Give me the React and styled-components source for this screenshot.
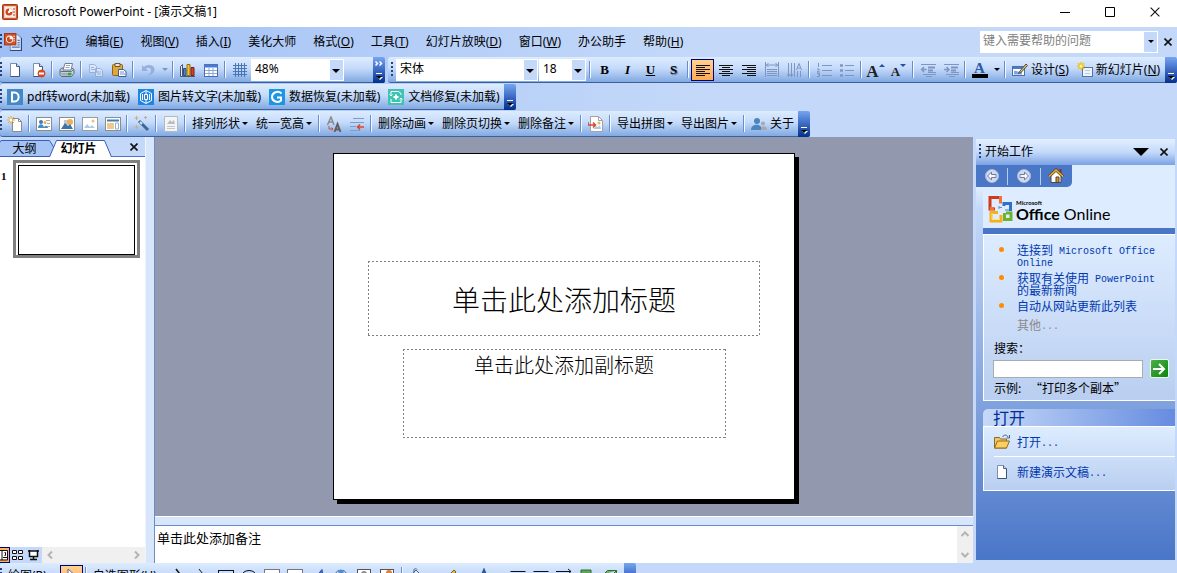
import React from 'react';
import styled, { createGlobalStyle, css } from 'styled-components';

const UI_FONT = '"Noto Sans", "Noto Sans CJK SC", sans-serif';
const SONG_FONT = '"Liberation Mono", "Noto Sans CJK SC", monospace';

const NAVY = '#000080';
const LINE = '#3b619c';
const PANEL = '#c4d9f9';
const LINK = '#0038b0';

const GlobalStyle = createGlobalStyle`
  * {
    box-sizing: border-box;
  }
  body {
    margin: 0;
    overflow: hidden;
    background: ${PANEL};
    font: 12px/16px ${UI_FONT};
    color: #000;
  }
  button,
  input,
  select {
    margin: 0;
    padding: 0;
    border: 0;
    border-radius: 0;
    background: none;
    font: inherit;
    color: inherit;
    appearance: none;
    outline: none;
  }
  svg {
    display: block;
    flex: none;
  }
`;

const Window = styled.div`
  display: flex;
  flex-direction: column;
  height: 100vh;
  overflow: hidden;
`;

/* ---------- title and menu ---------- */

const TitleBar = styled.header`
  display: flex;
  align-items: center;
  height: 27px;
  padding: 0 0 3px 2px;
  background: #fff;
`;

const Title = styled.h1`
  flex: 1;
  margin: 0 0 0 5px;
  font-size: 12px;
  line-height: 20px;
  font-weight: 400;
`;

const WindowButton = styled.button`
  display: grid;
  place-items: center;
  width: 45px;
  height: 24px;
`;

const Docks = styled.div`
  display: flex;
  flex-direction: column;
  gap: 1px;
  background: linear-gradient(90deg, #9ebef5, ${PANEL} 60%);
`;

const MenuBar = styled.nav`
  display: flex;
  align-items: center;
  gap: 1px;
  height: 29px;
`;

const Menu = styled.button`
  padding: 0 8px;
  white-space: nowrap;
`;

const Key = styled.span`
  text-decoration: underline;
  text-underline-offset: 1px;
`;

const HelpBox = styled.div`
  display: flex;
  flex: none;
  width: 178px;
  height: 22px;
  margin-left: auto;
  border: 1px solid #fff;
  background: #fff;
`;

const HelpInput = styled.input`
  flex: 1;
  min-width: 0;
  padding: 0 2px 2px;
  &::placeholder {
    color: #808080;
    opacity: 1;
  }
`;

const HelpDrop = styled.button`
  display: grid;
  place-items: center;
  width: 13px;
  background: ${PANEL};
`;

const CloseButton = styled.button`
  display: grid;
  place-items: center;
  width: 18px;
  height: 16px;
`;

/* ---------- toolbars ---------- */

const DockRow = styled.div`
  display: flex;
  gap: 3px;
`;

const ToolbarBox = styled.div`
  display: flex;
  align-items: center;
  flex: ${p => (p.$grow ? '1 1 auto' : 'none')};
  height: 26px;
  padding-left: ${p => (p.$inset ? '3px' : '0')};
  border-bottom: 1px solid ${LINE};
  border-radius: 3px;
  background: linear-gradient(#ddecfe, #c5dbfb 45%, #81a9e2);
  white-space: nowrap;
`;

const Grip = styled.span`
  flex: none;
  width: ${p => p.$width || 3}px;
  height: 16px;
  background: linear-gradient(#27417c 50%, transparent 50%) 0 0 / 2px 4px repeat-y;
`;

const Spacer = styled.span`
  width: 28px;
`;

const Cap = styled.button`
  display: flex;
  flex-direction: column;
  align-items: center;
  justify-content: space-between;
  flex: none;
  width: 12px;
  height: 26px;
  margin: 0 0 -1px auto;
  padding: 4px 0 3px;
  border-radius: 0 2px 2px 0;
  background: linear-gradient(#75a6f1, #3562bd 55%, #00318b);
`;

const Tool = styled.button`
  display: flex;
  align-items: center;
  justify-content: center;
  flex: none;
  min-width: 23px;
  height: 22px;
  opacity: ${p => (p.$off ? 0.75 : 1)};
  ${p =>
    p.$active &&
    css`
      border: 1px solid ${NAVY};
      background: linear-gradient(#ffd091, #ffab52);
    `};
`;

const LabelTool = styled.button`
  display: flex;
  align-items: center;
  flex: none;
  gap: ${p => p.$gap || 3}px;
  height: 22px;
  padding: 0 ${p => p.$pad || 4}px;
`;

const Separator = styled.span`
  flex: none;
  width: 2px;
  height: 17px;
  margin: 0 2px;
  border-left: 1px solid #6a8ccb;
  border-right: 1px solid #f1f9ff;
`;

const DropMark = styled.span`
  flex: none;
  border: 3px solid transparent;
  border-top-color: ${p => p.$color || '#000'};
  border-bottom: 0;
`;

const SmallDrop = styled.button`
  display: grid;
  place-items: center;
  flex: none;
  width: 11px;
  height: 22px;
`;

const ComboBox = styled.span`
  position: relative;
  flex: none;
  width: ${p => p.$width}px;
  height: 22px;
  margin-right: 1px;
  border: 1px solid #fff;
  background: linear-gradient(270deg, ${PANEL} 13px, #fff 13px);
  select {
    width: 100%;
    height: 20px;
    padding: 0 3px 2px;
  }
`;

const ComboMark = styled(DropMark)`
  position: absolute;
  right: 3px;
  top: 9px;
  border-width: 4px 4px 0;
  pointer-events: none;
`;

const Glyph = styled.span`
  font: ${p => (p.$italic ? 'italic ' : '')}bold 13px/16px 'Liberation Serif', serif;
  text-decoration: ${p => (p.$underline ? 'underline' : 'none')};
  text-shadow: ${p => (p.$shadow ? '1px 1px 1px #5b6c8c' : 'none')};
`;

const FontSizeGlyph = styled.span`
  align-self: flex-end;
  font: bold ${p => p.$size}px/18px 'Liberation Serif', serif;
  color: #222;
`;

const ColorGlyph = styled.span`
  width: 16px;
  height: 16px;
  border-bottom: 4px solid #000;
  font: bold 15px/12px 'Liberation Serif', serif;
  text-align: center;
  color: #2f5aa8;
`;

const Badge = styled.span`
  display: grid;
  place-items: center;
  width: 16px;
  height: 16px;
  background: ${p => p.$color};
`;

/* ---------- workspace ---------- */

const Workspace = styled.main`
  display: flex;
  flex: 1;
  min-height: 0;
`;

const Outline = styled.aside`
  display: flex;
  flex-direction: column;
  flex: none;
  width: 145px;
  background: #fff;
`;

const TabStrip = styled.div`
  display: flex;
  align-items: flex-end;
  height: 20px;
  padding-right: 5px;
  border-bottom: 1px solid #4a76c8;
  background: ${PANEL};
`;

const Tab = styled.button`
  position: relative;
  z-index: 0;
  width: ${p => (p.$active ? 63 : 55)}px;
  height: 17px;
  margin: 0 0 -1px ${p => (p.$active ? '-6px' : '0')};
  padding: 0 ${p => (p.$active ? 4 : 6)}px 1px 0;
  font-weight: ${p => (p.$active ? 700 : 400)};
  line-height: 15px;
  svg {
    position: absolute;
    z-index: -1;
    inset: 0;
  }
`;

const TabClose = styled(CloseButton)`
  margin: 0 -3px 1px auto;
`;

const Thumbs = styled.ol`
  display: flex;
  flex: 1;
  margin: 0;
  padding: 3px 5px 0 1px;
  list-style: none;
  li {
    display: flex;
    flex: 1;
    align-items: flex-start;
    justify-content: space-between;
  }
`;

const ThumbNumber = styled.span`
  padding-top: 8px;
  font: bold 11px/16px 'Liberation Serif', serif;
`;

const Thumb = styled.button`
  width: 127px;
  height: 98px;
  padding: 2px;
  border: 3px solid #808080;
  background: #fff;
  &::before {
    content: '';
    display: block;
    height: 100%;
    border: 1px solid #000;
  }
`;

const ViewRow = styled.div`
  display: flex;
  height: 16px;
  background: #f0f0f0;
`;

const ViewButton = styled.button`
  display: flex;
  align-items: center;
  justify-content: ${p => (p.$active ? 'flex-start' : 'center')};
  flex: none;
  width: ${p => (p.$active ? 10 : 16)}px;
  height: 16px;
  background: ${PANEL};
  ${p =>
    p.$active &&
    css`
      border: 1px solid ${NAVY};
      border-left: 0;
      background: #ffb25c;
    `};
`;

const ScrollTrack = styled.div`
  display: flex;
  flex: ${p => (p.$vertical ? 'none' : 1)};
  flex-direction: ${p => (p.$vertical ? 'column' : 'row')};
  align-items: center;
  justify-content: space-between;
  padding: 4px;
  background: #f0f0f0;
`;

const Splitter = styled.div`
  flex: none;
  width: 10px;
  border-left: 1px solid #eef4fe;
  border-right: 1px solid #6a8ccb;
  background: #d8e6fb;
`;

const Editor = styled.section`
  display: flex;
  flex: 1;
  flex-direction: column;
  min-width: 0;
`;

const Canvas = styled.div`
  display: flex;
  flex: 1;
  align-items: center;
  justify-content: center;
  min-height: 0;
  background: #9298ad;
`;

const Slide = styled.article`
  display: flex;
  flex-direction: column;
  align-items: center;
  flex: none;
  gap: 13px;
  width: 462px;
  height: 347px;
  padding-top: 107px;
  border: 1px solid #000;
  background: #fff;
  box-shadow: 4px 4px 0 #000;
`;

const dash = (dir, place, size) =>
  `repeating-linear-gradient(${dir}, #808080 0 2px, transparent 2px 4px) ${place} / ${size} no-repeat`;

const Placeholder = styled.div`
  width: ${p => (p.$sub ? 323 : 392)}px;
  height: ${p => (p.$sub ? 89 : 75)}px;
  padding-top: ${p => (p.$sub ? 2 : 20)}px;
  background: ${dash('90deg', 'top', '100% 1px')}, ${dash('90deg', 'bottom', '100% 1px')},
    ${dash('180deg', 'left', '1px 100%')}, ${dash('180deg', 'right', '1px 100%')};
  font-family: 'Noto Sans CJK SC', sans-serif;
  font-weight: 300;
  font-size: ${p => (p.$sub ? 20 : 28)}px;
  line-height: ${p => (p.$sub ? 28 : 36)}px;
  text-align: center;
`;

const NotesSplit = styled.div`
  flex: none;
  height: 10px;
  border-top: 1px solid #fff;
  border-bottom: 1px solid #6a8ccb;
  background: #d8e6fb;
`;

const Notes = styled.div`
  display: flex;
  flex: none;
  justify-content: space-between;
  height: 37px;
  background: #fff;
`;

const NotesText = styled.p`
  margin: 0;
  padding: 4px 2px;
  font-size: 13px;
`;

/* ---------- task pane ---------- */

const TaskPane = styled.aside`
  display: flex;
  flex: none;
  flex-direction: column;
  width: 204px;
  padding: 2px 2px 3px 3px;
  background: ${PANEL};
`;

const PaneHeader = styled.div`
  display: flex;
  align-items: center;
  height: 26px;
  padding: 0 2px 0 3px;
  background: linear-gradient(#e3efff, #c4dafa 50%, #7ba2e4);
`;

const PaneTitle = styled.h2`
  flex: 1;
  margin: 0 0 0 3px;
  font-size: 12px;
  font-weight: 400;
`;

const NavDrop = styled(CloseButton)`
  width: 28px;
`;

const PaneNav = styled.div`
  display: flex;
  align-items: center;
  height: 22px;
  background: #ddecff;
`;

const NavGroup = styled.div`
  display: flex;
  align-items: center;
  width: 96px;
  height: 22px;
  border-radius: 0 0 5px 0;
  background: #4a76c8;
`;

const NavButton = styled.button`
  display: grid;
  place-items: center;
  flex: 1;
`;

const NavLine = styled.span`
  width: 1px;
  height: 17px;
  background: #b9cdf0;
`;

const PaneBody = styled.div`
  flex: 1;
  padding-left: 7px;
  background: linear-gradient(#ddecff, #c4d9f9 6%, #4a76c8);
`;

const Brand = styled.div`
  display: flex;
  align-items: center;
  height: 47px;
  padding: 2px 0 0 4px;
  border-bottom: 6px solid #4a76c8;
  background: #ddecff;
`;

const BrandName = styled.div`
  display: flex;
  flex-direction: column;
  margin: 5px 0 0 1px;
  font-family: Lato, 'Liberation Sans', sans-serif;
  font-size: 16px;
  line-height: 16px;
  small {
    font-size: 6px;
    line-height: 6px;
    font-weight: 700;
  }
`;

const OnlineBox = styled.section`
  display: flex;
  flex-direction: column;
  padding: 9px 6px 4px 10px;
  border: 1px solid #fff;
  border-right: 0;
  background: linear-gradient(#ddecff, #b9cef0);
  font-family: 'Noto Sans CJK SC', sans-serif;
`;

const Links = styled.ul`
  display: flex;
  flex-direction: column;
  gap: 4px;
  margin: 0 0 0 23px;
  padding: 0;
  list-style: none;
  line-height: 12px;
  li {
    position: relative;
  }
  li::before {
    content: '';
    position: absolute;
    left: -18px;
    top: 3px;
    width: 5px;
    height: 5px;
    border-radius: 50%;
    background: #ff8c00;
  }
`;

const PaneLink = styled.a`
  color: ${LINK};
  text-decoration: none;
`;

const MoreLink = styled(PaneLink)`
  margin: 6px 0 0 23px;
  line-height: 14px;
  color: #8a8a8a;
`;

const Latin = styled.span`
  font-family: ${SONG_FONT};
  font-size: 10px;
  line-height: 0;
  vertical-align: 1px;
`;

const SearchLabel = styled.label`
  margin-top: 8px;
  line-height: 16px;
`;

const SearchRow = styled.div`
  display: flex;
  align-items: center;
  justify-content: space-between;
  margin: 3px 0 2px;
`;

const SearchInput = styled.input`
  flex: 1;
  min-width: 0;
  height: 18px;
  margin: 0 7px 0 -1px;
  padding: 0 3px;
  border: 1px solid #a5acb2;
  background: #fff;
`;

const GoButton = styled.button`
  display: grid;
  place-items: center;
  width: 19px;
  height: 19px;
  border: 1px solid #e8f6e8;
  border-radius: 2px;
  background: linear-gradient(135deg, #4db04d, #0a860a);
`;

const Example = styled.span`
  line-height: 16px;
`;

const OpenTitle = styled.h3`
  height: 17px;
  margin: 8px 0 0;
  padding-left: 10px;
  border-radius: 5px 0 0 0;
  background: linear-gradient(90deg, #c6d9f8, #668ce0);
  font: 16px/16px 'Noto Sans CJK SC', sans-serif;
  color: #002d96;
`;

const OpenBox = styled.section`
  padding: 0 0 3px 10px;
  border: 1px solid #fff;
  border-right: 0;
  background: linear-gradient(#ddecff, #b9cef0);
  font-family: 'Noto Sans CJK SC', sans-serif;
`;

const OpenItem = styled(PaneLink)`
  display: flex;
  align-items: center;
  gap: 7px;
  height: 30px;
  border-bottom: ${p => (p.$first ? '1px solid #fff' : '0')};
`;

const BottomDock = styled.footer`
  flex: none;
  height: 10px;
  overflow: hidden;
  background: ${PANEL};
`;

const DrawBar = styled(ToolbarBox)`
  width: 636px;
`;

/* ---------- icons ---------- */

const Icon = ({ size = 16, children, ...rest }) => (
  <svg width={size} height={size} viewBox="0 0 16 16" fill="none" aria-hidden="true" {...rest}>
    {children}
  </svg>
);

const page = (
  <>
    <path d="M3.5 1.5h6l3 3v10h-9z" fill="#fff" stroke="#7d8fae" />
    <path d="M12.5 4.5v10h-9" stroke="#3d5680" />
    <path d="M9.5 1.5v3h3" fill="#c7d6ee" stroke="#4b628c" />
  </>
);

const icons = {
  ppt: (
    <>
      <rect x="0.5" y="0.5" width="15" height="15" rx="1" fill="#d0542b" stroke="#a63a18" />
      <rect x="2.5" y="2.5" width="11" height="11" fill="#fbeee8" stroke="#f6c9b4" />
      <circle cx="7" cy="8" r="3.5" fill="#cf4520" />
      <path d="M7 8V4.5A3.5 3.5 0 0 1 10.5 8z" fill="#fff" />
      <circle cx="7" cy="8" r="1.2" fill="#fff" />
      <path d="M11 5h2M11 8h2M11 11h2" stroke="#b5401b" />
    </>
  ),
  pptDoc: (
    <>
      <path d="M5.5 1.5h7l3 3v11h-10z" fill="#dce8fb" stroke="#7f96c2" />
      <path d="M15.5 4.5v11h-10" stroke="#2c4878" />
      <path d="M7 12.5h7M12 6.5h2M12 8.5h2M12 10.5h2" stroke="#4f77b8" />
      <rect x="0.5" y="0.5" width="10" height="10" fill="#d0542b" stroke="#a63a18" />
      <circle cx="5" cy="5.5" r="3.2" fill="#fff" />
      <path d="M5 5.5V3A2.5 2.5 0 1 0 7.5 5.5z" fill="#cf4520" />
      <path d="M9 2.5v6" stroke="#fff" strokeDasharray="1 1" />
    </>
  ),
  page,
  deny: (
    <>
      {page}
      <circle cx="11.5" cy="11.5" r="3.5" fill="#dd4a24" stroke="#c64a28" />
      <path d="M9 11.5h5" stroke="#fff" strokeWidth="2" />
    </>
  ),
  printer: (
    <>
      <path d="M1 7.5l2-1.5h10l2 1.5v4l-2.5 3H2.5L1 12.5z" fill="#c9ced6" stroke="#5c6a80" />
      <path d="M6 1.5h7.5L12 8H4z" fill="#fff" stroke="#6e7f99" />
      <path d="M7 3.5h4M6.5 5.5h4" stroke="#9aa9c0" />
      <path d="M1.5 9.5h11l2-2" stroke="#5f6e84" />
      <path d="M2 11h10v2.5H3z" fill="#a2acba" />
      <path d="M9 12h3.5" stroke="#22b32c" strokeWidth="2.5" />
    </>
  ),
  copy: (
    <>
      <path d="M1.5 2.5h5l2 2v6h-7zM7.5 6.5h5l2 2v6h-7z" fill="#dfe9fa" stroke="#8ea6cf" />
      <path d="M3 5.5h3M3 7.5h4M9 10h4M9 12h4" stroke="#8ea6cf" />
    </>
  ),
  paste: (
    <>
      <rect x="1.5" y="2.5" width="10" height="11" rx="1" fill="#e0a73d" stroke="#8f641a" />
      <path d="M4 1.5h5v3H4z" fill="#ece5cc" stroke="#6c5a32" />
      <path d="M7.5 7.5h5l2.5 2v5H7.5z" fill="#fff" stroke="#3d5b94" />
      <path d="M9 10h4M9 12h5" stroke="#6c8cc6" />
    </>
  ),
  undo: (
    <path
      d="M2 3v6h6L5.8 6.5C8 5 11 5.5 11 8.5c0 2-1.2 3.5-3 5 3.5-.8 6.5-3 6.5-6 0-4.5-6.5-6-10.5-2.5z"
      fill="#8aa3d0"
    />
  ),
  chart: (
    <>
      <path d="M0.5 4.5l2-2v12h-2z" fill="#dfe7f2" stroke="#4b5770" />
      <path d="M2.5 14.5H15" stroke="#4b5770" />
      <path d="M3.5 6.5h2.5v7H3.5z" fill="#4d81d0" stroke="#28508f" />
      <path d="M7 2.5h3v11H7z" fill="#f1c331" stroke="#977010" />
      <path d="M11 5.5h3v8h-3z" fill="#cf4232" stroke="#7d1c12" />
    </>
  ),
  table: (
    <>
      <rect x="1.5" y="2.5" width="13" height="12" fill="#fff" stroke="#4a6db0" />
      <path d="M1 4h14" stroke="#4a7ad0" strokeWidth="3" />
      <path d="M2 8.5h12M2 11.5h12M6 6v8M10 6v8" stroke="#8ba8d6" />
    </>
  ),
  grid: (
    <path
      d="M3.5 1v14M6.5 1v14M9.5 1v14M12.5 1v14M1 3.5h14M1 6.5h14M1 9.5h14M1 12.5h14"
      stroke="#4a74b8"
    />
  ),
  left: <path d="M1 3.5h14M1 5.5h9M1 7.5h14M1 9.5h9M1 11.5h14M1 13.5h9" stroke="#111" />,
  center: <path d="M1 3.5h14M4 5.5h8M1 7.5h14M4 9.5h8M1 11.5h14M4 13.5h8" stroke="#111" />,
  right: <path d="M1 3.5h14M6 5.5h9M1 7.5h14M6 9.5h9M1 11.5h14M6 13.5h9" stroke="#111" />,
  spread: (
    <path
      d="M1.5 0v15M14.5 0v15M2 3h12M4.5 1L2.5 3l2 2M11.5 1l2 2-2 2M3 7.5h10M3 9.5h10M3 11.5h10M3 13.5h10"
      stroke="#7f96c2"
    />
  ),
  vertical: (
    <>
      <path d="M1.5 1v14M4.5 1v14M7.5 1v14M10.5 9v6M13.5 9v6" stroke="#7f96c2" />
      <path d="M9.5 8L12 1.5 14.5 8M10.5 6h3" stroke="#7f96c2" />
      <path d="M0 12l1.5 2.5L3 12M3 12l1.5 2.5L6 12" stroke="#7f96c2" />
    </>
  ),
  numbers: (
    <>
      <path d="M6 3.5h10M6 8.5h10M6 13.5h10" stroke="#7f96c2" />
      <path d="M2.5 1v4M1 7h2v1.5L1 10h3M1 11.5h2.5v3H1M2 13h1" stroke="#7f96c2" />
    </>
  ),
  bullets: (
    <>
      <path d="M6 3.5h9M6 8.5h9M6 13.5h9" stroke="#7f96c2" />
      <path d="M1 3.5h3M1 8.5h3M1 13.5h3" stroke="#7f96c2" strokeWidth="2.5" />
    </>
  ),
  outdent: (
    <>
      <path d="M1 2.5h15M8 10.5h8M3 12.5h13M6 14.5h6" stroke="#7f96c2" />
      <path d="M6.5 7.5h-5M4 5L1.5 7.5 4 10" stroke="#7f96c2" strokeWidth="1.5" />
      <path d="M8 5.5h7M8 8.5h5" stroke="#7f96c2" strokeWidth="2" />
    </>
  ),
  indent: (
    <>
      <path d="M1 2.5h15M8 10.5h8M3 12.5h13M6 14.5h6" stroke="#7f96c2" />
      <path d="M1 7.5h5M3.5 5L6 7.5 3.5 10" stroke="#7f96c2" strokeWidth="1.5" />
      <path d="M8 5.5h7M8 8.5h5" stroke="#7f96c2" strokeWidth="2" />
    </>
  ),
  design: (
    <>
      <rect x="0.5" y="4.5" width="12" height="9" fill="#fff" stroke="#4b6fae" />
      <path d="M1 6h11" stroke="#4a7ad0" strokeWidth="2" />
      <path d="M2 9c2-1 4 2 8 0v3.5H2z" fill="#7ea6e0" />
      <path d="M14 2l1.5 1.5L9 10.5l-2.5 1L8 9z" fill="#f0c24a" stroke="#4c4a56" />
    </>
  ),
  newSlide: (
    <>
      <rect x="5.5" y="5.5" width="10" height="9" fill="#eef4fd" stroke="#5874a4" />
      <path d="M8 8.5h5M8 11.5h5" stroke="#b7c8e4" />
      <path d="M4 0v8M0 4h8M1 1l6 6M7 1L1 7" stroke="#f0c22a" strokeWidth="1.5" />
      <circle cx="4" cy="4" r="1.5" fill="#fff59a" />
    </>
  ),
  starPage: (
    <>
      <path d="M5.5 2.5h6l3 3v10h-9z" fill="#fff" stroke="#8b8b8b" />
      <path d="M11.5 2.5v3h3" stroke="#8b8b8b" />
      <path d="M4 0v8M0 4h8M1 1l6 6M7 1L1 7" stroke="#e8a838" />
      <circle cx="4" cy="4" r="1.5" fill="#fff" />
    </>
  ),
  shapes: (
    <>
      <rect x="0.5" y="1.5" width="15" height="13" fill="#fff" stroke="#8c8c8c" />
      <circle cx="5" cy="6" r="2" fill="#3c7fb5" />
      <circle cx="9" cy="6.5" r="1.5" fill="#e6b35c" />
      <path d="M2 12c0-5 6-5 6 0zM8 12c0-3 4-3 4 0z" fill="#4b8cbe" />
      <path d="M10 4.5h4M11 7.5h3M11 10.5h3" stroke="#a9a9a9" />
    </>
  ),
  geometry: (
    <>
      <rect x="0.5" y="1.5" width="15" height="13" fill="#fff" stroke="#8c8c8c" />
      <path d="M5 4h6v5H5z" fill="#c8c8c8" />
      <circle cx="11" cy="6" r="3" fill="#e6b35c" />
      <path d="M2 13l4-6 3 3 2-2 3 5z" fill="#3c74a8" />
    </>
  ),
  image: (
    <>
      <rect x="0.5" y="1.5" width="15" height="13" fill="#fff" stroke="#9c9c9c" />
      <circle cx="11" cy="5" r="1.5" fill="#eec06e" />
      <path d="M2 12l3-4 3 3 2-2 3 3z" fill="#a9cbe4" />
    </>
  ),
  layout: (
    <>
      <rect x="0.5" y="1.5" width="15" height="13" fill="#fff" stroke="#8c8c8c" />
      <path d="M2 4.5h12" stroke="#3c7fb5" strokeWidth="2" />
      <path d="M2 7h7v6H2z" fill="#eec98c" />
      <path d="M10.5 7v6h3V7z" stroke="#8db2d0" />
    </>
  ),
  wand: (
    <>
      <path d="M5 5l9 9" stroke="#3c6898" strokeWidth="3" />
      <path d="M6 6l2 2" stroke="#d5e7f7" strokeWidth="2" />
      <path d="M2.5 0v4M.5 2h4M11.5 0v3M10 1.5h3M2.5 9v4M.5 11h4" stroke="#c9ac86" />
    </>
  ),
  note: (
    <>
      <path d="M1.5 0.5h13v15h-13z" fill="#f4f5f7" stroke="#b5b8bf" />
      <path d="M4 8l3-4 2 2 2-2 1 4z" fill="#b9bcc4" />
      <path d="M4 10.5h8M4 12.5h8" stroke="#c2c5cb" />
    </>
  ),
  swapText: (
    <>
      <path d="M1.5 9L5 1l3 8M3 6h4" stroke="#8a8a8a" strokeWidth="1.5" />
      <path d="M8.5 16l3-8 3 8M10 13.5h3" stroke="#606060" strokeWidth="2" />
      <path d="M3 10v3h4M5.5 11.5L7 13l-1.5 1.5" stroke="#d9482b" />
    </>
  ),
  spacing: (
    <>
      <path d="M4 2.5h11M1 6.5h14M1 10.5h6M1 14.5h10" stroke="#7d9cc8" />
      <path d="M15 11H9M11 8.5L8.5 11l2.5 2.5" stroke="#d9482b" strokeWidth="1.5" />
    </>
  ),
  exportPage: (
    <>
      <path d="M2.5 0.5h8l4 4v11h-12z" fill="#fff" stroke="#a2a2a2" />
      <path d="M10.5 0.5v4h4" stroke="#a2a2a2" />
      <circle cx="11" cy="7" r="1.5" fill="#e9b65b" />
      <path d="M5 13l3-3 2 1 2-2 1 4z" fill="#a9cbe4" />
      <path d="M0 6v3h7M5 6.5L7.5 9 5 11.5" stroke="#d9482b" strokeWidth="1.5" />
    </>
  ),
  people: (
    <>
      <circle cx="6" cy="5" r="3" fill="#4b87bd" />
      <path d="M0 14c0-7 11-7 11 0z" fill="#4b87bd" />
      <circle cx="12" cy="7.5" r="2" fill="#a9a9a9" />
      <path d="M10 14c0-5 6-5 6 0z" fill="#a9a9a9" />
    </>
  ),
  folder: (
    <>
      <path d="M0.5 3.5h5l1 1.5h6v9h-12z" fill="#efc869" stroke="#8d6a24" />
      <path d="M0.5 14l3-7H15.5l-3 7z" fill="#ffcf5c" stroke="#8f6a22" />
      <path d="M8.5 3C10 .5 13 .5 14 3M15.5 1v3h-3" stroke="#3f6285" />
    </>
  ),
  home: (
    <>
      <path d="M3 8L8 3l5 5v6.5H3z" fill="#fff" stroke="#4c4c4c" />
      <path d="M12.5 1v4" stroke="#7c3b17" strokeWidth="2" />
      <path d="M1 8.5L8 2l7 6.5" stroke="#5a4520" strokeWidth="3" />
      <path d="M1 8.5L8 2l7 6.5" stroke="#f2b233" strokeWidth="1.5" />
      <path d="M8 9h3v5.5H8z" fill="#c98f3e" stroke="#5b4420" />
    </>
  ),
  pointer: <path d="M5 1v12l3-3 2 5 2-1-2-5h4z" fill="#fff" stroke="#4b6fae" />,
  line: <path d="M4 1l10 13" stroke="#111" strokeWidth="1.5" />,
  arrow: <path d="M4 1l10 13M8 14h6V8" stroke="#111" />,
  rect: <rect x="0.5" y="2.5" width="15" height="11" stroke="#111" />,
  oval: <ellipse cx="8" cy="8.5" rx="7.5" ry="6" stroke="#111" />,
  textBox: (
    <>
      <rect x="0.5" y="1.5" width="15" height="13" fill="#fff" stroke="#777" />
      <path d="M2.5 9l2-4 2 4M8 5.5h5M8 8.5h5M3 11.5h10" stroke="#4468a4" />
    </>
  ),
  wordArt: <path d="M2 14L12 1.5l1.5 12.5h-3l-.5-3H7l-2 3z" fill="#3d74cc" stroke="#214c96" />,
  diagram: (
    <>
      <circle cx="8" cy="4" r="2.5" fill="#5289d4" />
      <circle cx="3" cy="12" r="2.5" fill="#5ab35c" />
      <circle cx="13" cy="12" r="2.5" fill="#d95c3a" />
      <path d="M2 8c0-3 2-5 4-5.5M14 8c0-3-2-5-4-5.5" stroke="#445a80" />
    </>
  ),
  clip: (
    <>
      <rect x="1.5" y="1.5" width="13" height="13" fill="#fff" stroke="#555" />
      <circle cx="8" cy="6" r="3" fill="#8c8c8c" />
    </>
  ),
  picture: (
    <>
      <rect x="1.5" y="1.5" width="13" height="13" fill="#fff" stroke="#555" />
      <circle cx="10" cy="5" r="3" fill="#e57f2c" />
      <path d="M2 14l5-6 6 6z" fill="#4c9a52" />
    </>
  ),
  bucket: <path d="M2 8l6-6 6 6-6 6zM6 8V1.5c0-1 3-1 3 0" fill="#dfeafa" stroke="#46618f" />,
  brush: <path d="M2 14l3-1 9-9-2-2-9 9z" fill="#f0b93a" stroke="#795b1e" />,
  letter: <path d="M3 14L8 2l5 12M5 10h6" stroke="#2f5597" strokeWidth="2" />,
  lineStyle: <path d="M0.5 3.5h15" stroke="#111" />,
  dashes: <path d="M0.5 3.5h15" stroke="#111" />,
  arrowLine: <path d="M0 3.5h15M12 1l3 2.5-3 2.5" stroke="#111" />,
  shadow: (
    <>
      <path d="M5 6h10v9H5z" fill="#6b7d92" />
      <path d="M2 2h10v10H2z" fill="#5fa556" stroke="#2f6a30" />
    </>
  ),
  cube: (
    <path
      d="M1.5 6.5l4-4h9v8l-4 4h-9zM1.5 6.5h9l4-4M10.5 6.5v8"
      fill="#72b066"
      stroke="#2f6a30"
    />
  ),
};

const Pic = ({ name, size }) => <Icon size={size}>{icons[name]}</Icon>;

const Cross = ({ size = 8, width = 1.6 }) => (
  <svg width={size} height={size} viewBox="0 0 8 8" aria-hidden="true">
    <path d="M0.5 0.5l7 7M7.5 0.5l-7 7" stroke="#111" strokeWidth={width} />
  </svg>
);

const Chevron = ({ turn }) => (
  <svg width="8" height="8" viewBox="0 0 8 8" fill="none" aria-hidden="true">
    <path
      d="M6 0.5L2.5 4 6 7.5"
      stroke="#b4b4b4"
      strokeWidth="2"
      transform={`rotate(${turn} 4 4)`}
    />
  </svg>
);

const SizeMark = ({ up }) => (
  <svg width="6" height="14" viewBox="0 0 6 14" aria-hidden="true">
    <path d={up ? 'M0 4h6L3 1z' : 'M0 1h6L3 4z'} fill="#27509c" />
  </svg>
);

const OfficeLogo = () => (
  <svg width="28" height="28" viewBox="0 0 28 28" fill="none" aria-hidden="true">
    <path d="M3 2.5h10.5V7M3 1v13h5" stroke="#cf3a1c" strokeWidth="3" />
    <path d="M13.5 1v7.5M7 13.5H3" stroke="#ee7436" strokeWidth="3" />
    <path d="M16 8.5h7.5V16M17 7v4" stroke="#2f6fce" strokeWidth="3" />
    <path d="M18 15h4" stroke="#8bb4ea" strokeWidth="2" />
    <path d="M11 17.5H4V26h10v-6" stroke="#f4b21a" strokeWidth="3" />
    <path d="M5 18v6.5h8" stroke="#ffe27a" />
    <path d="M17.5 18v6.5H24V18h-5" stroke="#6fb32a" strokeWidth="3" />
    <path d="M12 11v3M15 12.5h-3" stroke="#6b8bc0" />
  </svg>
);

const NavArrow = ({ flip }) => (
  <svg width="14" height="14" viewBox="0 0 14 14" aria-hidden="true">
    <circle cx="7" cy="7" r="6.5" fill="#d5dbe6" stroke="#a9b8d4" />
    <path
      d="M2.5 7L6.5 3v2.5h4.5v3H6.5V11z"
      fill="#f4f6fa"
      stroke="#5f7fbd"
      transform={flip ? 'rotate(180 7 7)' : undefined}
    />
  </svg>
);

/* ---------- composed parts ---------- */

const ToolbarEnd = ({ more }) => (
  <Cap aria-label="工具栏选项">
    <svg width="8" height="6" viewBox="0 0 8 6" fill="none" aria-hidden="true">
      {more && (
        <path d="M0.5 0.5l2 2-2 2M4.5 0.5l2 2-2 2" stroke="#fff" strokeWidth="1.5" />
      )}
    </svg>
    <svg width="8" height="7" viewBox="0 0 8 7" aria-hidden="true">
      <path d="M1 0.5h6" stroke="#fff" />
      <path d="M2 4h6L5 7z" fill="#fff" />
      <path d="M1 3h6L4 6z" fill="#000" />
    </svg>
  </Cap>
);

const Combo = ({ label, width, value }) => (
  <ComboBox $width={width}>
    <select aria-label={label} defaultValue={value}>
      <option>{value}</option>
    </select>
    <ComboMark />
  </ComboBox>
);

// items are icon names, '|' is a separator
const ToolSet = ({ items, off }) =>
  items.map((item, i) =>
    item === '|' ? (
      <Separator key={i} />
    ) : (
      <Tool key={i} $off={off} aria-label={item}>
        <Pic name={item} />
      </Tool>
    ),
  );

const ListDrop = ({ color }) => (
  <SmallDrop aria-label="列表">
    <DropMark $color={color} />
  </SmallDrop>
);

const DropText = ({ children, pad }) => (
  <LabelTool $gap={2} $pad={pad}>
    <span>{children}</span>
    <DropMark />
  </LabelTool>
);

const menus = [
  ['文件', 'F'],
  ['编辑', 'E'],
  ['视图', 'V'],
  ['插入', 'I'],
  ['美化大师'],
  ['格式', 'O'],
  ['工具', 'T'],
  ['幻灯片放映', 'D'],
  ['窗口', 'W'],
  ['办公助手'],
  ['帮助', 'H'],
];

const plugins = [
  {
    text: 'pdf转word(未加载)',
    color: '#4488c8',
    mark: <path d="M5 3.5h2.5c5.5 0 5.5 9 0 9H5z" stroke="#fff" strokeWidth="2" />,
  },
  {
    text: '图片转文字(未加载)',
    color: '#1e86e0',
    mark: (
      <path
        d="M8 1.5l5.5 3v7L8 14.5l-5.5-3v-7zM4.5 5v6M11.5 5v6M6.5 5.5h3v5h-3zM8 2v3M8 11v3"
        stroke="#fff"
      />
    ),
  },
  {
    text: '数据恢复(未加载)',
    color: '#1c96e4',
    mark: (
      <path
        d="M12.5 4.5C9 1 3 3.5 3 8s6 6.5 9 3.5V8.5H8"
        stroke="#fff"
        strokeWidth="2"
      />
    ),
  },
  {
    text: '文档修复(未加载)',
    color: '#3fc4b4',
    mark: (
      <>
        <path
          d="M3 6V2.5h7.5l2.5 2V6M13 10v3.5H3V10M1.5 5.5L3 7l1.5-1.5M11.5 10.5L13 9l1.5 1.5"
          stroke="#fff"
        />
        <path d="M8 5.5v5M5.5 8h5" stroke="#fff" strokeWidth="2" />
      </>
    ),
  },
];

const MenuLine = () => (
  <MenuBar>
    <Grip />
    <Pic name="pptDoc" size={18} />
    {menus.map(([text, key]) => (
      <Menu key={text}>
        {text}
        {key && (
          <>
            (<Key>{key}</Key>)
          </>
        )}
      </Menu>
    ))}
    <HelpBox>
      <HelpInput aria-label="帮助" placeholder="键入需要帮助的问题" />
      <HelpDrop aria-label="展开">
        <DropMark />
      </HelpDrop>
    </HelpBox>
    <CloseButton aria-label="关闭窗口">
      <Cross />
    </CloseButton>
  </MenuBar>
);

const StandardBar = () => (
  <ToolbarBox>
    <Grip />
    <ToolSet items={['page', 'deny', '|', 'printer', '|']} />
    <ToolSet items={['copy']} off />
    <ToolSet items={['paste', '|']} />
    <ToolSet items={['undo']} off />
    <ListDrop color="#7f93b8" />
    <ToolSet items={['|', 'chart', 'table', '|', 'grid']} />
    <Combo label="显示比例" width={93} value="48%" />
    <Spacer />
    <ToolbarEnd more />
  </ToolbarBox>
);

const FormatBar = () => (
  <ToolbarBox $grow $inset>
    <Grip $width={5} />
    <Combo label="字体" width={142} value="宋体" />
    <Combo label="字号" width={47} value="18" />
    <Separator />
    <Tool aria-label="加粗">
      <Glyph>B</Glyph>
    </Tool>
    <Tool aria-label="倾斜">
      <Glyph $italic>I</Glyph>
    </Tool>
    <Tool aria-label="下划线">
      <Glyph $underline>U</Glyph>
    </Tool>
    <Tool aria-label="阴影">
      <Glyph $shadow>S</Glyph>
    </Tool>
    <Separator />
    <Tool $active aria-label="左对齐">
      <Pic name="left" />
    </Tool>
    <ToolSet
      items={['center', 'right', 'spread', 'vertical', '|', 'numbers', 'bullets', '|']}
    />
    <Tool aria-label="增大字号">
      <FontSizeGlyph $size={17}>A</FontSizeGlyph>
      <SizeMark up />
    </Tool>
    <Tool aria-label="减小字号">
      <FontSizeGlyph $size={13}>A</FontSizeGlyph>
      <SizeMark />
    </Tool>
    <ToolSet items={['|', 'outdent', 'indent', '|']} />
    <Tool aria-label="字体颜色">
      <ColorGlyph>A</ColorGlyph>
    </Tool>
    <ListDrop />
    <Separator />
    <LabelTool>
      <Pic name="design" />
      <span>
        设计(<Key>S</Key>)
      </span>
    </LabelTool>
    <LabelTool>
      <Pic name="newSlide" />
      <span>
        新幻灯片(<Key>N</Key>)
      </span>
    </LabelTool>
    <ToolbarEnd />
  </ToolbarBox>
);

const PluginBar = () => (
  <ToolbarBox>
    <Grip />
    {plugins.map(({ text, color, mark }) => (
      <LabelTool key={text} $gap={4}>
        <Badge $color={color}>
          <Icon>{mark}</Icon>
        </Badge>
        {text}
      </LabelTool>
    ))}
    <ToolbarEnd />
  </ToolbarBox>
);

const BeautifyBar = () => (
  <ToolbarBox>
    <Grip />
    <ToolSet
      items={['starPage', '|', 'shapes', 'geometry', 'image', 'layout', '|', 'wand', '|', 'note', '|']}
    />
    <DropText>排列形状</DropText>
    <DropText>统一宽高</DropText>
    <ToolSet items={['|', 'swapText', 'spacing', '|']} />
    <DropText>删除动画</DropText>
    <DropText>删除页切换</DropText>
    <DropText>删除备注</DropText>
    <ToolSet items={['|', 'exportPage', '|']} />
    <DropText>导出拼图</DropText>
    <DropText>导出图片</DropText>
    <Separator />
    <LabelTool>
      <Pic name="people" />
      关于
    </LabelTool>
    <ToolbarEnd />
  </ToolbarBox>
);

const SlideList = () => (
  <Outline>
    <TabStrip>
      <Tab>
        <svg width="55" height="17" aria-hidden="true">
          <path
            d="M-1 16.5V3.5L1 0.5H49.5L54.5 8.5 50 16.5z"
            fill="#a5c3f5"
            stroke="#3b5fb5"
          />
        </svg>
        大纲
      </Tab>
      <Tab $active>
        <svg width="63" height="17" aria-hidden="true">
          <path d="M0.5 17L7.5 0.5H55.5L62.5 17" fill="#fff" stroke="#3b5fb5" />
        </svg>
        幻灯片
      </Tab>
      <TabClose aria-label="关闭">
        <Cross />
      </TabClose>
    </TabStrip>
    <Thumbs>
      <li>
        <ThumbNumber>1</ThumbNumber>
        <Thumb aria-label="幻灯片 1" />
      </li>
    </Thumbs>
    <ViewRow>
      <ViewButton $active aria-label="普通视图">
        <svg width="8" height="11" viewBox="0 0 8 11" fill="none" aria-hidden="true">
          <path d="M0 0.5h7.5v9H0" fill="#fff" />
          <path d="M0 0.5h7.5v9.5H0M2 0v10M4.5 2.5h1v3h-1M3 7.5h4" stroke="#111" />
        </svg>
      </ViewButton>
      <ViewButton aria-label="幻灯片浏览视图">
        <svg width="12" height="11" viewBox="0 0 12 11" fill="#fff" aria-hidden="true">
          <path
            d="M0.5 0.5h4v3h-4zM6.5 0.5h4v3h-4zM0.5 6.5h4v3h-4zM6.5 6.5h4v3h-4z"
            stroke="#111"
          />
        </svg>
      </ViewButton>
      <ViewButton aria-label="幻灯片放映">
        <svg width="12" height="11" viewBox="0 0 12 11" fill="none" aria-hidden="true">
          <path d="M1.5 1h8v5h-8z" fill="#fff" />
          <path d="M0 1h11M1.5 0v6.5h8V0M5.5 6v4M2 9.5h7" stroke="#111" strokeWidth="1.5" />
        </svg>
      </ViewButton>
      <ScrollTrack>
        <Chevron turn={0} />
        <Chevron turn={180} />
      </ScrollTrack>
    </ViewRow>
  </Outline>
);

const StartPane = () => (
  <TaskPane>
    <PaneHeader>
      <Grip />
      <PaneTitle>开始工作</PaneTitle>
      <NavDrop aria-label="其他任务窗格">
        <svg width="16" height="8" viewBox="0 0 16 8" aria-hidden="true">
          <path d="M0 0h16L8 8z" />
        </svg>
      </NavDrop>
      <CloseButton aria-label="关闭任务窗格">
        <Cross />
      </CloseButton>
    </PaneHeader>
    <PaneNav>
      <NavGroup>
        <NavButton aria-label="后退">
          <NavArrow />
        </NavButton>
        <NavLine />
        <NavButton aria-label="前进">
          <NavArrow flip />
        </NavButton>
        <NavLine />
        <NavButton aria-label="主页">
          <Pic name="home" />
        </NavButton>
      </NavGroup>
    </PaneNav>
    <PaneBody>
      <Brand>
        <OfficeLogo />
        <BrandName>
          <small>Microsoft</small>
          <span>
            <b>Office</b> Online
          </span>
        </BrandName>
      </Brand>
      <OnlineBox>
        <Links>
          <li>
            <PaneLink href="#office">
              连接到<Latin> Microsoft Office Online</Latin>
            </PaneLink>
          </li>
          <li>
            <PaneLink href="#news">
              获取有关使用<Latin> PowerPoint </Latin>
              <br />
              的最新新闻
            </PaneLink>
          </li>
          <li>
            <PaneLink href="#update">自动从网站更新此列表</PaneLink>
          </li>
        </Links>
        <MoreLink href="#more">
          其他<Latin>...</Latin>
        </MoreLink>
        <SearchLabel htmlFor="pane-search">搜索：</SearchLabel>
        <SearchRow>
          <SearchInput id="pane-search" />
          <GoButton aria-label="搜索">
            <svg width="13" height="12" viewBox="0 0 13 12" fill="none" aria-hidden="true">
              <path d="M0 6h11M6 1l5 5-5 5" stroke="#fff" strokeWidth="2" />
            </svg>
          </GoButton>
        </SearchRow>
        <Example>
          示例:<Latin>&nbsp;</Latin> “打印多个副本”
        </Example>
      </OnlineBox>
      <OpenTitle>打开</OpenTitle>
      <OpenBox>
        <OpenItem $first href="#open">
          <Pic name="folder" />
          <span>
            打开<Latin>...</Latin>
          </span>
        </OpenItem>
        <OpenItem href="#new">
          <Pic name="page" />
          <span>
            新建演示文稿<Latin>...</Latin>
          </span>
        </OpenItem>
      </OpenBox>
    </PaneBody>
  </TaskPane>
);

const App = () => (
  <Window>
    <GlobalStyle />
    <TitleBar>
      <Pic name="ppt" />
      <Title>Microsoft PowerPoint - [演示文稿1]</Title>
      <WindowButton aria-label="最小化">
        <svg width="10" height="10" aria-hidden="true">
          <path d="M0 5.5h10" stroke="#000" />
        </svg>
      </WindowButton>
      <WindowButton aria-label="最大化">
        <svg width="10" height="10" fill="none" aria-hidden="true">
          <path d="M0.5 0.5h9v9h-9z" stroke="#000" />
        </svg>
      </WindowButton>
      <WindowButton aria-label="关闭">
        <Cross size={10} width={0.9} />
      </WindowButton>
    </TitleBar>
    <Docks>
      <MenuLine />
      <DockRow>
        <StandardBar />
        <FormatBar />
      </DockRow>
      <DockRow>
        <PluginBar />
      </DockRow>
      <DockRow>
        <BeautifyBar />
      </DockRow>
    </Docks>
    <Workspace>
      <SlideList />
      <Splitter />
      <Editor>
        <Canvas>
          <Slide>
            <Placeholder>单击此处添加标题</Placeholder>
            <Placeholder $sub>单击此处添加副标题</Placeholder>
          </Slide>
        </Canvas>
        <NotesSplit />
        <Notes>
          <NotesText>单击此处添加备注</NotesText>
          <ScrollTrack $vertical>
            <Chevron turn={90} />
            <Chevron turn={270} />
          </ScrollTrack>
        </Notes>
      </Editor>
      <StartPane />
    </Workspace>
    <BottomDock>
      <DrawBar>
        <Grip />
        <DropText pad={5}>
          绘图(<Key>R</Key>)
        </DropText>
        <Tool $active aria-label="选择对象">
          <Pic name="pointer" />
        </Tool>
        <Separator />
        <DropText>
          自选图形(<Key>U</Key>)
        </DropText>
        <ToolSet items={['line', 'arrow', 'rect', 'oval', 'textBox', 'textBox', 'wordArt']} />
        <ToolSet items={['diagram', 'clip', 'picture', '|', 'bucket']} />
        <ListDrop />
        <ToolSet items={['brush']} />
        <ListDrop />
        <ToolSet items={['letter']} />
        <ListDrop />
        <ToolSet items={['lineStyle', 'dashes', 'arrowLine', 'shadow', 'cube']} />
        <ToolbarEnd />
      </DrawBar>
    </BottomDock>
  </Window>
);

export default App;
